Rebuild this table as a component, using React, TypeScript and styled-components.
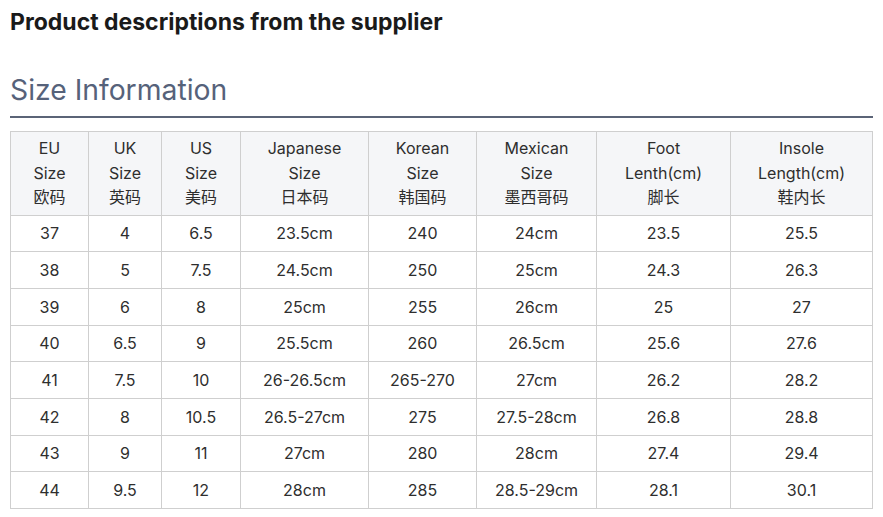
import styled, { createGlobalStyle } from "styled-components";

const GlobalStyle = createGlobalStyle`
  body {
    margin: 0;
    background: #fff;
    font-family: Inter, "Noto Sans CJK SC", sans-serif;
  }
`;

const Page = styled.div`
  padding: 8px 10px 0 10px;
`;

const Title = styled.h2`
  margin: 0;
  font-size: 23px;
  line-height: 28px;
  font-weight: 700;
  color: #1a1a1a;
`;

const SectionHeading = styled.h3`
  margin: 36px 0 0 0;
  font-size: 28.3px;
  line-height: 36px;
  font-weight: 400;
  color: #56627a;
  padding-bottom: 8px;
  border-bottom: 2px solid #5b6477;
`;

const Table = styled.table`
  margin-top: 13px;
  width: 863px;
  border-collapse: collapse;
  table-layout: fixed;
  font-size: 16px;
  color: #2e2e2e;
`;

const HeadCell = styled.th<{ $w: number }>`
  width: ${(p) => p.$w}px;
  background: #f5f6f8;
  border: 1px solid #cfcfcf;
  font-weight: 400;
  line-height: 24.5px;
  padding: 4px 0 5px;
  text-align: center;
`;

const Cell = styled.td`
  border: 1px solid #cfcfcf;
  height: 35.7px;
  padding: 0;
  text-align: center;
  vertical-align: middle;
`;

const columns: { w: number; lines: string[] }[] = [
  { w: 77, lines: ["EU", "Size", "欧码"] },
  { w: 72, lines: ["UK", "Size", "英码"] },
  { w: 78, lines: ["US", "Size", "美码"] },
  { w: 127, lines: ["Japanese", "Size", "日本码"] },
  { w: 107, lines: ["Korean", "Size", "韩国码"] },
  { w: 119, lines: ["Mexican", "Size", "墨西哥码"] },
  { w: 133, lines: ["Foot", "Lenth(cm)", "脚长"] },
  { w: 141, lines: ["Insole", "Length(cm)", "鞋内长"] },
];

const rows = [
  ["37", "4", "6.5", "23.5cm", "240", "24cm", "23.5", "25.5"],
  ["38", "5", "7.5", "24.5cm", "250", "25cm", "24.3", "26.3"],
  ["39", "6", "8", "25cm", "255", "26cm", "25", "27"],
  ["40", "6.5", "9", "25.5cm", "260", "26.5cm", "25.6", "27.6"],
  ["41", "7.5", "10", "26-26.5cm", "265-270", "27cm", "26.2", "28.2"],
  ["42", "8", "10.5", "26.5-27cm", "275", "27.5-28cm", "26.8", "28.8"],
  ["43", "9", "11", "27cm", "280", "28cm", "27.4", "29.4"],
  ["44", "9.5", "12", "28cm", "285", "28.5-29cm", "28.1", "30.1"],
];

export default function App() {
  return (
    <>
      <GlobalStyle />
      <Page>
        <Title>Product descriptions from the supplier</Title>
        <SectionHeading>Size Information</SectionHeading>
        <Table>
          <thead>
            <tr>
              {columns.map((c) => (
                <HeadCell key={c.lines[0]} $w={c.w}>
                  {c.lines.map((l, i) => (
                    <div key={i}>{l}</div>
                  ))}
                </HeadCell>
              ))}
            </tr>
          </thead>
          <tbody>
            {rows.map((r) => (
              <tr key={r[0]}>
                {r.map((v, i) => (
                  <Cell key={i}>{v}</Cell>
                ))}
              </tr>
            ))}
          </tbody>
        </Table>
      </Page>
    </>
  );
}
